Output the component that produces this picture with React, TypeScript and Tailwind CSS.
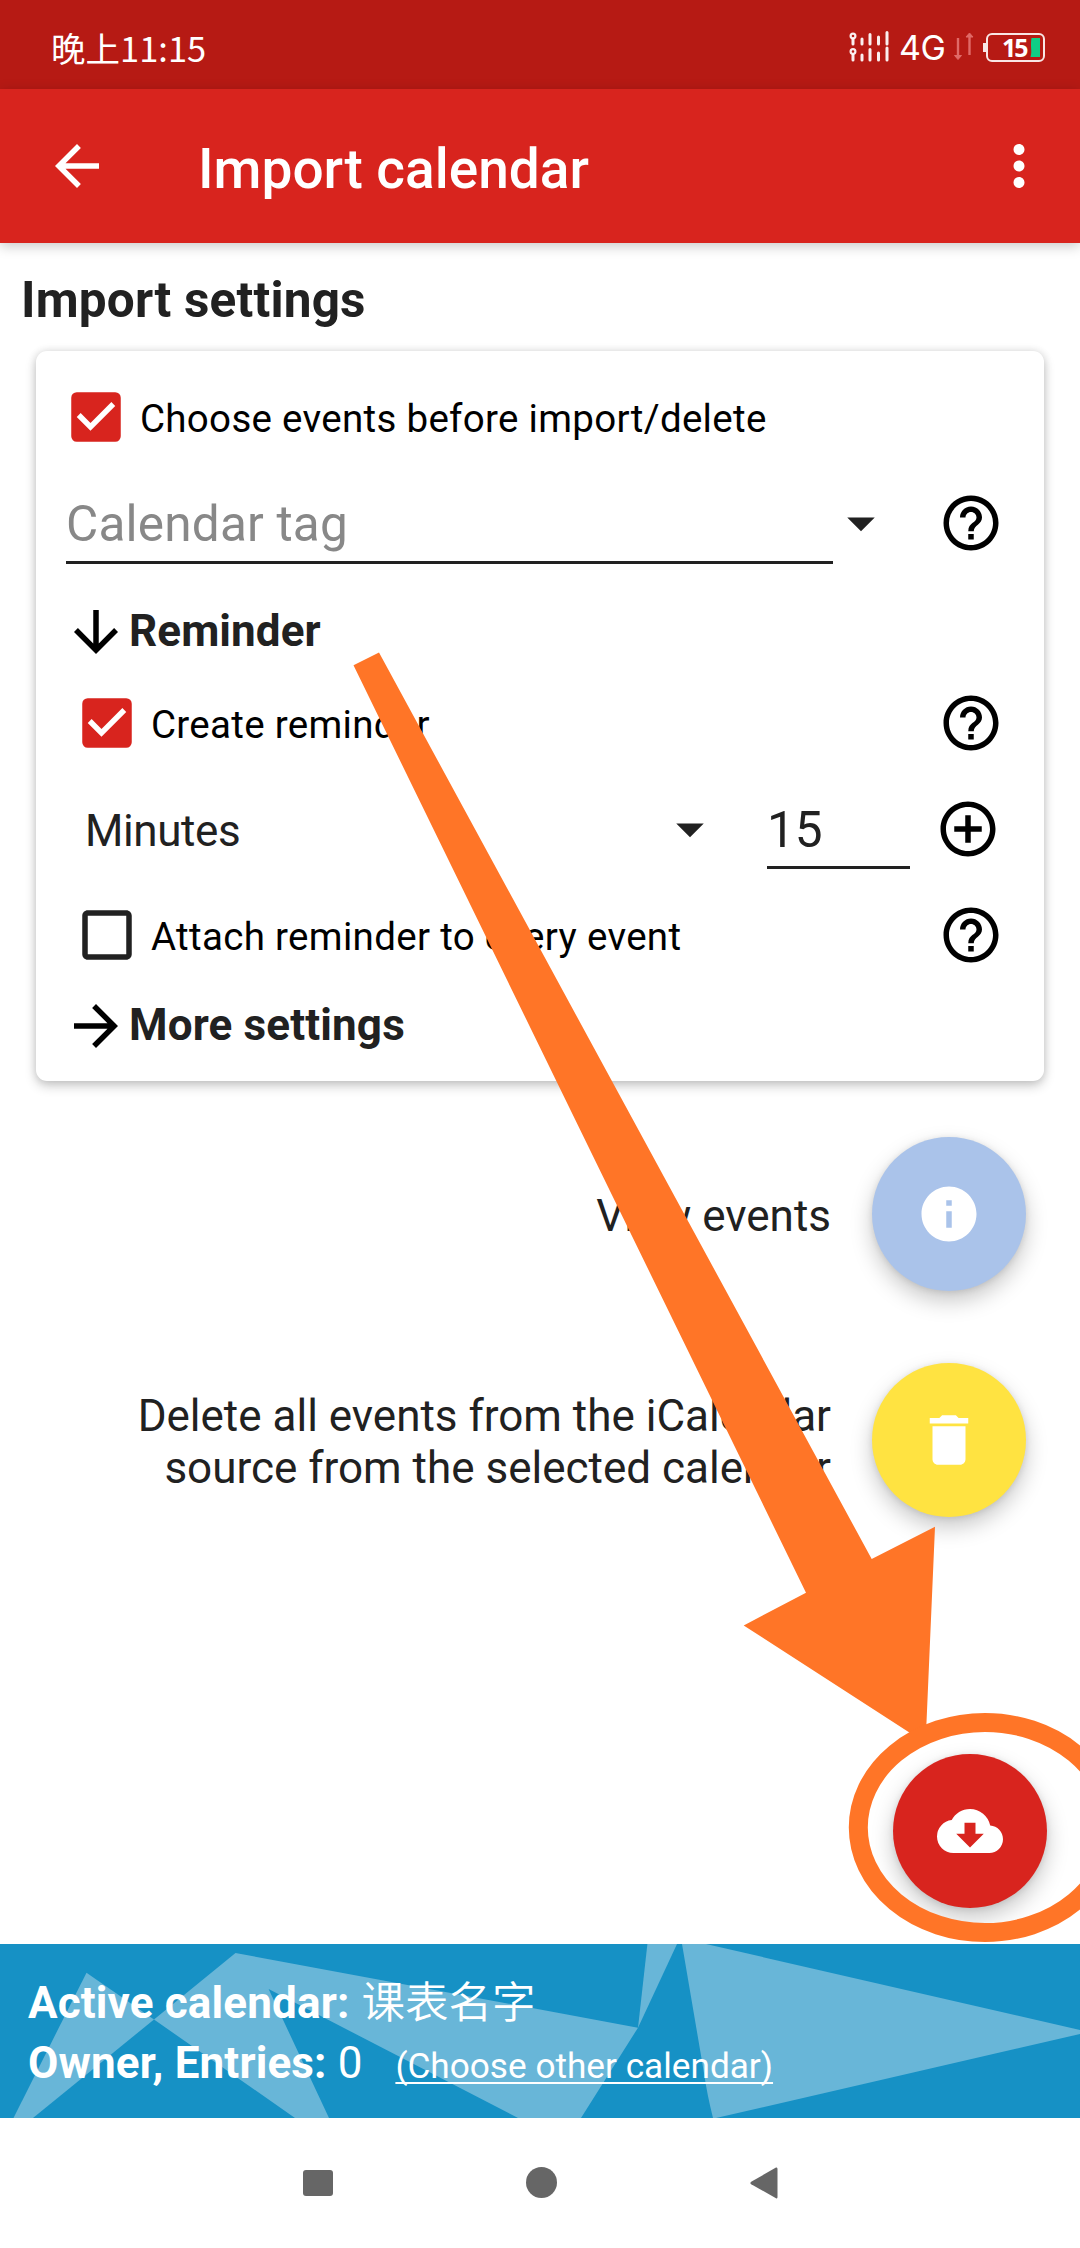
import React from "react";
import {
  MdAddCircleOutline,
  MdArrowBack,
  MdArrowDownward,
  MdArrowDropDown,
  MdArrowForward,
  MdCheckBox,
  MdCheckBoxOutlineBlank,
  MdCloudDownload,
  MdDelete,
  MdHelpOutline,
  MdInfo,
  MdMoreVert,
} from "react-icons/md";

function StatusIcons() {
  return (
    <div className="flex h-10 w-[196px] items-center text-white">
      <svg width="41" height="40" viewBox="849 27 41 40" className="block shrink-0">
        <g fill="none" stroke="#fff" strokeOpacity="0.93" strokeWidth="3" strokeLinecap="round">
          <circle cx="853" cy="36" r="2.4" strokeWidth="2.2" />
          <circle cx="853" cy="51.5" r="2.4" strokeWidth="2.2" />
          <path d="M853 39v5M862 39v5M870 34.500v9.500M878.500 37v7M887 32.500v11.500" />
          <path d="M853 55v5M862 55v5M870 49.500v10.500M878.500 53v7M887 48v12" />
        </g>
      </svg>
      <span className="mt-[2px] ml-[9px] w-[52px] font-['Inter',sans-serif] text-[34px] leading-10 tracking-[-0.5px] whitespace-nowrap">4G</span>
      <svg width="24" height="40" viewBox="950 27 24 40" className="block shrink-0">
        <g stroke="#e06a67" strokeWidth="2.400" fill="#e06a67">
          <path d="M957 38v18" />
          <path d="M953.500 55.500h7l-3.500 4z" strokeWidth="1" />
          <path d="M968.500 37v18" />
          <path d="M965 37h7l-3.500-4z" strokeWidth="1" />
        </g>
      </svg>
      <div className="ml-[8px] flex items-center">
        <div className="h-[9px] w-[3px] bg-[#f9e6e5]" />
        <div className="flex h-[29px] w-[59px] items-center rounded-[6px] border-[2.6px] border-[#f9e6e5] pl-[14px]">
          <span className="w-[28px] font-['Open_Sans',sans-serif] text-[25px] leading-6 font-bold tracking-[-2px]">15</span>
          <svg width="10" height="19" viewBox="1029 37 10 19" className="block shrink-0">
            <path d="M1030.500 37h8.500v19h-9.500c2-6-.5-10 1-19z" fill="#0fce85" />
          </svg>
        </div>
      </div>
    </div>
  );
}

function Checked() {
  return <MdCheckBox className="size-[66px] shrink-0 text-[#d8241e]" />;
}

function Help() {
  return <MdHelpOutline className="ml-auto size-[66px] shrink-0 text-black" />;
}

function Fab({ className, children }: { className: string; children: React.ReactNode }) {
  return (
    <button
      className={
        "flex size-[154px] shrink-0 items-center justify-center rounded-full text-white shadow-[0_10px_22px_rgba(0,0,0,0.22),0_1px_6px_rgba(0,0,0,0.1)] " +
        className
      }
    >
      {children}
    </button>
  );
}

export default function App() {
  return (
    <div className="relative flex h-[2248px] w-[1080px] flex-col overflow-hidden bg-white font-['Roboto','Noto_Sans_CJK_SC',sans-serif] text-[#212121]">
      <div className="flex h-[89px] shrink-0 items-center justify-between bg-[#b61a14] pr-[35px] pl-[51px]">
        <span className="mt-[4px] font-['Noto_Sans_CJK_SC',sans-serif] text-[34.5px] leading-[50px] whitespace-nowrap text-white">晚上11:15</span>
        <div className="mt-[5px]">
          <StatusIcons />
        </div>
      </div>

      <header className="z-10 flex h-[154px] shrink-0 items-center bg-[#d8241e] pr-7 pl-11 text-white shadow-[0_3px_12px_rgba(0,0,0,0.22)]">
        <MdArrowBack className="size-[66px]" />
        <h1 className="mt-[6px] ml-[88px] text-[55px] leading-[64px] font-medium">Import calendar</h1>
        <MdMoreVert className="ml-auto size-[66px]" />
      </header>

      <main className="flex h-[1701px] shrink-0 flex-col">
        <h2 className="mt-[28px] h-[80px] pl-[21px] text-[49.5px] leading-[58px] font-bold tracking-[0.2px]">Import settings</h2>

        <section className="mx-[36px] h-[730px] shrink-0 rounded-[11px] bg-white pt-[13px] pr-[40px] pl-[27px] shadow-[0_5px_12px_rgba(0,0,0,0.2),0_0_8px_rgba(0,0,0,0.12)]">
          <div className="flex h-[106px] items-center">
            <Checked />
            <span className="mt-[4px] ml-[11px] text-[38.5px] tracking-[0.3px] text-black">Choose events before import/delete</span>
          </div>
          <div className="flex h-[106px] items-center pl-[3px]">
            <div className="mt-[-6px] flex h-[88px] w-[767px] items-center border-b-[3px] border-[#212121] pt-[11px] text-[49.5px] tracking-[0.2px] text-[#888]">Calendar tag</div>
            <MdArrowDropDown className="ml-[-5px] size-[66px]" />
            <Help />
          </div>
          <div className="flex h-[112px] items-center">
            <MdArrowDownward className="size-[66px] text-black" />
            <span className="mt-[-2px] text-[44px] font-bold tracking-[0.1px]">Reminder</span>
          </div>
          <div className="flex h-[70px] items-center pl-[11px]">
            <Checked />
            <span className="mt-[3px] ml-[11px] text-[38.5px] tracking-[0.3px] text-black">Create reminder</span>
            <Help />
          </div>
          <div className="flex h-[142px] items-center pl-[22px]">
            <span className="mt-[4px] w-[572px] text-[44px] tracking-[-0.4px]">Minutes</span>
            <MdArrowDropDown className="size-[66px]" />
            <div className="ml-[44px] flex h-[80px] w-[143px] items-center border-b-[3px] border-[#212121] pt-[5px] text-[49.5px]">15</div>
            <MdAddCircleOutline className="ml-[25px] size-[66px] text-black" />
          </div>
          <div className="flex h-[70px] items-center pl-[11px]">
            <MdCheckBoxOutlineBlank className="size-[66px]" />
            <span className="mt-[4px] ml-[11px] text-[38.5px] tracking-[0.32px] text-black">Attach reminder to every event</span>
            <Help />
          </div>
          <div className="flex h-[111px] items-center">
            <MdArrowForward className="size-[66px] text-black" />
            <span className="mt-[-1px] text-[44px] font-bold tracking-[0.15px]">More settings</span>
          </div>
        </section>

        <div className="mt-[56px] flex shrink-0 items-center justify-end gap-[41px] pr-[54px]">
          <span className="mt-[4px] text-[44px] leading-[52px]">View events</span>
          <Fab className="bg-[#aac3ea]">
            <MdInfo className="size-[66px]" />
          </Fab>
        </div>
        <div className="mt-[72px] flex shrink-0 items-center justify-end gap-[41px] pr-[54px]">
          <p className="mt-[3px] text-right text-[44px] leading-[52px]">
            Delete all events from the iCalendar
            <br />
            source from the selected calendar
          </p>
          <Fab className="bg-[#ffe341]">
            <MdDelete className="size-[66px]" />
          </Fab>
        </div>
        <div className="mt-[237px] flex justify-end pr-[33px]">
          <Fab className="bg-[#d8241e]">
            <MdCloudDownload className="size-[66px]" />
          </Fab>
        </div>
      </main>

      <footer className="relative h-[174px] shrink-0 bg-[#1691c5] pt-[33px] pl-7 text-white">
        <svg viewBox="0 1944 1080 174" className="absolute inset-0 h-[174px] w-[1080px]" fill="#68b6d8">
          <path d="M86.500 1972.700 154 2019.500 33 2118H13.500z" />
          <path d="M154 2019.500 235.500 1953 638 2027.700 581 2118H518L268.600 1989 329 2118H295z" />
          <path d="M647.400 1944H677L638 2027.700z" />
          <path d="M682 1944H706L1080 2030V2034L716 2118H713Q707 2094 704 2073z" />
        </svg>
        <div className="relative mt-[-4px] flex h-[63px] items-baseline text-[44px] leading-[54px] whitespace-nowrap">
          <b className="font-bold tracking-[0.15px]">Active calendar:</b>
          <span className="ml-[12px] font-['Noto_Sans_CJK_SC',sans-serif] text-[43.5px] font-[350]">课表名字</span>
        </div>
        <div className="relative flex h-[59px] items-baseline text-[44px] leading-[54px] whitespace-nowrap">
          <b className="font-bold tracking-[0.15px]">Owner, Entries:</b>
          <span className="ml-[11px]">0</span>
          <a className="ml-[33px] text-[35.2px] underline decoration-2 underline-offset-[4px] [text-decoration-skip-ink:none]">(Choose other calendar)</a>
        </div>
      </footer>

      <nav className="flex h-[130px] shrink-0 items-start justify-center gap-[193px] pt-[49px] text-[#666]">
        <div className="mt-[3px] h-[26px] w-[30px] rounded-[3px] bg-current" />
        <div className="size-[31px] rounded-full bg-current" />
        <svg width="28" height="32" viewBox="0 0 28 32" fill="currentColor">
          <path d="M26 .6Q27.500 0 27.500 2V30Q27.500 32 26 31.200L1.200 17.300Q-.5 16 1.200 14.700z" />
        </svg>
      </nav>

      <svg viewBox="0 0 1080 2248" className="pointer-events-none absolute inset-0 z-20 h-[2248px] w-[1080px]">
        <path d="M353.500 665.300 379 652.500 871.700 1559 935 1526.700 925.600 1743 743.700 1625.500 806 1592.700z" fill="#ff7527" />
        <ellipse cx="985" cy="1827.500" rx="126.700" ry="105" fill="none" stroke="#ff7527" strokeWidth="19" />
      </svg>
    </div>
  );
}
